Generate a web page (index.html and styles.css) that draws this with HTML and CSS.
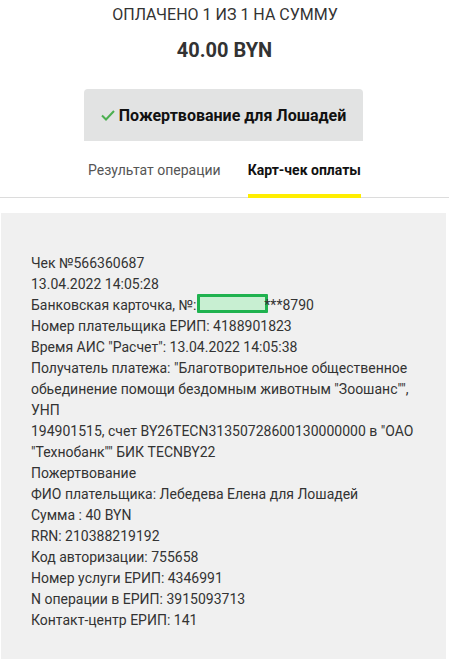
FILE: index.html
```html
<!DOCTYPE html>
<html lang="ru">
<head>
<meta charset="utf-8">
<link rel="stylesheet" href="styles.css">
</head>
<body>
<div class="header">
  <div class="title">ОПЛАЧЕНО 1 ИЗ 1 НА СУММУ</div>
  <div class="amount">40.00 BYN</div>
  <div class="service">
    <svg class="check" width="14" height="11" viewBox="0 0 14 11"><path d="M1 5.5 L5 9.5 L13 1" fill="none" stroke="#4caf50" stroke-width="2"/></svg>
    <span>Пожертвование для Лошадей</span>
  </div>
</div>
<div class="tabs">
  <div class="tab">Результат операции</div>
  <div class="tab active">Карт-чек оплаты</div>
</div>
<div class="receipt">
  <div class="line">Чек №566360687</div>
  <div class="line">13.04.2022 14:05:28</div>
  <div class="line">Банковская карточка, №:<span class="mask"></span>***8790</div>
  <div class="line">Номер плательщика ЕРИП: 4188901823</div>
  <div class="line">Время АИС "Расчет": 13.04.2022 14:05:38</div>
  <div class="line">Получатель платежа: "Благотворительное общественное обьединение помощи бездомным животным "Зоошанс"", УНП</div>
  <div class="line">194901515, счет BY26TECN31350728600130000000 в "ОАО "Технобанк"" БИК TECNBY22</div>
  <div class="line">Пожертвование</div>
  <div class="line">ФИО плательщика: Лебедева Елена для Лошадей</div>
  <div class="line">Сумма : 40 BYN</div>
  <div class="line">RRN: 210388219192</div>
  <div class="line">Код авторизации: 755658</div>
  <div class="line">Номер услуги ЕРИП: 4346991</div>
  <div class="line">N операции в ЕРИП: 3915093713</div>
  <div class="line">Контакт-центр ЕРИП: 141</div>
</div>
</body>
</html>
```
FILE: styles.css
```css
html, body {
  margin: 0;
  padding: 0;
  background: #fff;
}
body {
  font-family: Roboto, "Liberation Sans", Arial, sans-serif;
  color: #333;
  width: 449px;
  height: 659px;
  overflow: hidden;
}
.header {
  display: flex;
  flex-direction: column;
  align-items: center;
  padding-top: 5px;
}
.title {
  font-size: 16px;
  line-height: 20px;
  color: #333;
  margin-left: 1px;
}
.amount {
  font-size: 20px;
  font-weight: 700;
  line-height: 24px;
  margin-top: 13px;
  color: #333;
}
.service {
  margin-top: 27px;
  margin-left: -2px;
  width: 279px;
  height: 52px;
  background: #e2e3e3;
  border-radius: 4px 4px 0 0;
  display: flex;
  align-items: center;
  justify-content: center;
  gap: 4px;
  font-size: 16px;
  font-weight: 700;
  color: #111;
}
.check {
  margin-top: 1px;
}
.tabs {
  display: flex;
  justify-content: center;
  gap: 27px;
  border-bottom: 1px solid #dcdcdc;
  margin-top: 17px;
}
.tab {
  font-size: 14px;
  line-height: 20px;
  color: #555;
  padding: 2px 0 14px;
  border-bottom: 4px solid transparent;
  margin-bottom: -1px;
}
.tab.active {
  color: #111;
  font-weight: 700;
  border-bottom-color: #ffee00;
}
.receipt {
  margin: 15px 3px 0 1px;
  background: #f0f0f0;
  padding: 40px 30px 40px 30px;
  font-size: 14px;
  line-height: 21px;
  color: #333;
}
.mask {
  display: inline-block;
  width: 65px;
  height: 13px;
  background: #c8efd2;
  border: 3px solid #1fb24f;
  border-radius: 1px;
  vertical-align: -3px;
  margin: -2px -4px 0 1px;
}
```
